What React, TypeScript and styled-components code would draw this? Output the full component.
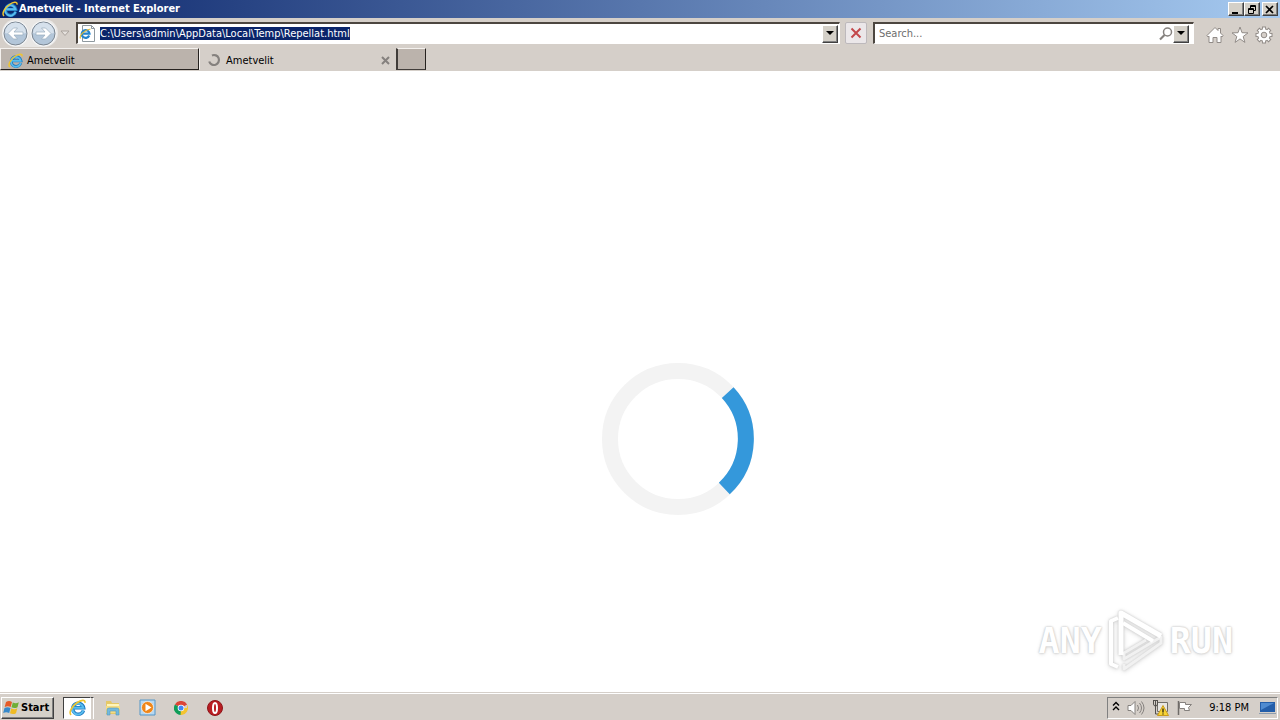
import React from "react";
import styled, { createGlobalStyle, css } from "styled-components";

const Global = createGlobalStyle`
  * { box-sizing: border-box; }
  body { margin: 0; background: #fff; }
  body, button, input { font-family: "DejaVu Sans Condensed", "DejaVu Sans", sans-serif; font-size: 11px; color: #000; }
  button { padding: 0; margin: 0; border: 0; background: none; }
  svg { display: block; flex: none; }
`;

const raised = css`
  background: #d4d0c8;
  border: 1px solid;
  border-color: #fff #404040 #404040 #fff;
  box-shadow: inset -1px -1px #808080;
`;

const Desktop = styled.div`
  min-height: 100vh;
  display: flex;
  flex-direction: column;
`;

const TitleBar = styled.header`
  height: 18px;
  display: flex;
  align-items: center;
  gap: 1px;
  padding: 0 2px;
  background: linear-gradient(90deg, #0a246a, #a6caf0);
`;

const Title = styled.h1`
  flex: 1;
  margin: 0;
  color: #fff;
  font-size: 11px;
  line-height: 18px;
`;

const WindowButtons = styled.div`
  display: flex;
`;

const WindowButton = styled.button<{ $apart?: boolean }>`
  ${raised}
  width: 16px;
  height: 14px;
  margin-left: ${(p) => (p.$apart ? 2 : 0)}px;
  display: grid;
  place-items: center;
`;

const NavBar = styled.nav`
  height: 30px;
  display: flex;
  align-items: center;
  padding: 0 4px 0 2px;
  background: #d5cfc9;
`;

const History = styled.div`
  display: flex;
  height: 28px;
  width: 56px;
  background: #e9e7e5;
  border-radius: 14px;
`;

const IconButton = styled.button<{ $w: number }>`
  width: ${(p) => p.$w}px;
  height: 28px;
  display: grid;
  place-items: center;
`;

const Field = styled.div<{ $grow: number }>`
  flex: ${(p) => p.$grow} 1 0;
  height: 22px;
  display: flex;
  align-items: center;
  padding: 0 1px;
  background: #fff;
  border: solid;
  border-width: 2px 1px 1px 2px;
  border-color: #4c4640 #fff #fff #4c4640;
`;

const FieldLine = styled.label<{ $indent?: boolean }>`
  flex: 1;
  height: 19px;
  display: flex;
  align-items: center;
  gap: 4px;
  padding-left: ${(p) => (p.$indent ? 3 : 0)}px;
`;

const TextInput = styled.input`
  flex: 1;
  min-width: 0;
  height: 16px;
  border: 0;
  padding: 0;
  outline: none;
  background: none;
  &::placeholder { color: #6d6d6d; opacity: 1; }
  &::selection { background: #0a246a; color: #fff; }
`;

const DropButton = styled.button<{ $inset?: boolean }>`
  ${raised}
  width: 16px;
  height: 18px;
  margin-right: ${(p) => (p.$inset ? 3 : 0)}px;
  display: grid;
  place-items: center;
`;

const StopButton = styled.button`
  width: 22px;
  height: 22px;
  margin: 0 6px 0 5px;
  display: grid;
  place-items: center;
  background: #ebe7e9;
  border: 1px solid #bdb9bc;
  border-radius: 2px;
`;

const Tools = styled.div`
  display: flex;
  margin-left: 9px;
  padding-top: 3px;
`;

const TabBar = styled.div`
  height: 23px;
  display: flex;
  background: #d5cfc9;
`;

const Tab = styled.div<{ $active?: boolean }>`
  width: ${(p) => (p.$active ? 197 : 199)}px;
  height: 22px;
  display: flex;
  align-items: center;
  padding: 2px 5px 0 7px;
  border: 1px solid;
  border-color: ${(p) => (p.$active ? "#d5cfc9 #d5cfc9 #d5cfc9 #f4f1ee" : "#f4f1ee #26221f #26221f #f4f1ee")};
  background: ${(p) => (p.$active ? "#d5cfc9" : "#bbb3ac")};
`;

const TabLabel = styled.button`
  flex: 1;
  display: flex;
  align-items: center;
  gap: 4px;
  text-align: left;
`;

const NewTab = styled.button`
  width: 30px;
  height: 22px;
  background: #bbb3ac;
  border: solid;
  border-width: 1px 1px 1px 2px;
  border-color: #f4f1ee #26221f #403c39 #403c39;
`;

const Page = styled.main`
  flex: 1;
  display: flex;
  flex-direction: column;
  justify-content: space-between;
  padding-top: 292px;
`;

const Loader = styled.div`
  padding-left: 47%;
`;

const Watermark = styled.div`
  align-self: flex-end;
  display: flex;
  align-items: center;
  gap: 5px;
  margin: 0 47px 18px 0;
`;

const MarkWord = styled.span`
  font-family: "DejaVu Sans Mono", monospace;
  font-weight: bold;
  font-size: 35px;
  line-height: 66px;
  color: #fff;
  text-shadow: 0 0 2px #c4c4c4, 0 0 2px #d8d8d8, 0 1px 4px #dedede;
`;

const MarkLogo = styled.svg`
  filter: drop-shadow(0 0 1px #c8c8c8) drop-shadow(0 1px 2px #dedede);
`;

const TaskBar = styled.footer`
  height: 28px;
  display: flex;
  align-items: center;
  padding: 2px 2px 0 1px;
  background: #d5cfc9;
  border-top: 1px solid #d5cfc9;
  box-shadow: inset 0 1px #fff;
`;

const StartButton = styled.button`
  ${raised}
  width: 53px;
  height: 22px;
  display: flex;
  align-items: center;
  gap: 1px;
  padding-left: 1px;
  font-weight: bold;
`;

const RunningApp = styled.button`
  width: 28px;
  height: 22px;
  margin-left: 9px;
  display: grid;
  place-items: center;
  background: #fff;
  border: 1px solid;
  border-color: #404040 #fff #fff #404040;
`;

const StackedWindow = styled.span`
  width: 3px;
  height: 22px;
  margin-right: 2px;
  border-top: 1px solid #404040;
  border-right: 1px solid #fff;
`;

const Tray = styled.div`
  height: 22px;
  margin-left: auto;
  display: flex;
  align-items: center;
  padding: 0 1px 0 4px;
  gap: 7px;
  border: 1px solid;
  border-color: #808080 #fff #fff #808080;
`;

const Clock = styled.time`
  margin: 0 3px 0 9px;
  white-space: nowrap;
`;

const IELogo = ({ size }: { size: number }) => (
  <svg width={size} height={size} viewBox="0 0 16 16" fill="none">
    <path d="M13.6 10.800A5.200 5.200 0 1 1 13.800 8.300H4.500" stroke="#1d78c0" strokeWidth="3.200" />
    <path d="M13.500 10.600A5.200 5.200 0 1 1 13.500 8.300H4.500" stroke="#59bdee" strokeWidth="1.900" />
    <path d="M2 15C-.8 12.500 3.100 6.500 7.500 3.500C11 1.100 15.600 0 15 3.600" stroke="#f0c52f" strokeWidth="1.500" />
  </svg>
);

const Arrow = ({ forward }: { forward?: boolean }) => (
  <svg width="27" height="27" viewBox="0 0 27 27">
    <circle cx="13.500" cy="13.500" r="13" fill="#f5f6f7" />
    <circle cx="13.500" cy="13.500" r="11.500" fill="#b3c6d9" stroke="#7b8590" />
    <path d="M3 13a10.500 10.500 0 0 1 21 0q-10.500 3-21 0" fill="#d6e1ec" />
    <path
      d={forward ? "M6 12h9l-3.500-4h4l5.500 5.500-5.500 5.500h-4l3.500-4H6z" : "M21 12h-9l3.500-4h-4L6 13.500l5.500 5.500h4L12 15h9z"}
      fill="#fff"
      stroke="#9aacbd"
      strokeWidth=".7"
    />
  </svg>
);

const Down = () => (
  <svg width="8" height="5" viewBox="0 0 8 5">
    <path d="M0 0h8L4 4z" fill="#000" />
  </svg>
);

export default function App() {
  const address = React.useRef<HTMLInputElement>(null);
  React.useEffect(() => {
    address.current?.focus();
    address.current?.select();
  }, []);

  return (
    <Desktop>
      <Global />
      <TitleBar>
        <IELogo size={16} />
        <Title>Ametvelit - Internet Explorer</Title>
        <WindowButtons>
          <WindowButton aria-label="Minimize">
            <svg width="10" height="9"><path d="M1 7h6v2H1z" /></svg>
          </WindowButton>
          <WindowButton aria-label="Restore">
            <svg width="10" height="9" fill="none" stroke="#000">
              <path d="M3.500 3V.5h5v5H7M3 1.500h6M1.500 3.500h5v5h-5zM1 4.500h6" />
            </svg>
          </WindowButton>
          <WindowButton $apart aria-label="Close">
            <svg width="10" height="9"><path d="M1 1l7 7M8 1L1 8" stroke="#000" strokeWidth="1.700" /></svg>
          </WindowButton>
        </WindowButtons>
      </TitleBar>

      <NavBar>
        <History>
          <IconButton $w={27} aria-label="Back"><Arrow /></IconButton>
          <IconButton $w={29} aria-label="Forward"><Arrow forward /></IconButton>
        </History>
        <IconButton $w={18} aria-label="Recent pages">
          <svg width="14" height="7"><path d="M1 1h8L5 5.500z" fill="#e5e1dd" stroke="#aaa39d" /></svg>
        </IconButton>
        <Field $grow={766}>
          <FieldLine>
            <svg width="17" height="17" viewBox="0 0 17 17" fill="none">
              <path d="M3.500.5h9l3 3v13h-12z" fill="#fff" stroke="#8f999f" />
              <path d="M12.500.5v3h3" stroke="#8f999f" />
              <path d="M10.200 10.500A3.900 3.900 0 1 1 10.500 8.700H3.500" stroke="#2484cc" strokeWidth="2.200" />
              <path d="M1.500 13.500C0 11 5 5 11.500 4" stroke="#e3b92f" strokeWidth="1.200" />
            </svg>
            <TextInput
              ref={address}
              aria-label="Address"
              spellCheck={false}
              defaultValue="C:\Users\admin\AppData\Local\Temp\Repellat.html"
            />
          </FieldLine>
          <DropButton aria-label="Show addresses"><Down /></DropButton>
        </Field>
        <StopButton aria-label="Stop">
          <svg width="12" height="12" viewBox="0 0 12 12">
            <path d="M1.500 1.500l9 9M10.500 1.500l-9 9" stroke="#c3484b" strokeWidth="2" />
          </svg>
        </StopButton>
        <Field $grow={319}>
          <FieldLine $indent>
            <TextInput aria-label="Search" placeholder="Search..." />
            <svg width="14" height="14" viewBox="0 0 14 14" fill="none" stroke="#85817e">
              <circle cx="8.500" cy="5" r="4" strokeWidth="1.500" />
              <path d="M5.500 8L1 12.500" strokeWidth="2.200" />
            </svg>
          </FieldLine>
          <DropButton $inset aria-label="Search options"><Down /></DropButton>
        </Field>
        <Tools>
          <IconButton $w={24} aria-label="Home">
            <svg width="18" height="18" viewBox="0 0 18 18">
              <path d="M9 1.500l3 3v-2h2.500v4.500L17 9.500l-1 1.500-1-.9v6.400h-4v-5H7v5H3v-6.400l-1 .9-1-1.500z" fill="#fff" stroke="#918b87" />
            </svg>
          </IconButton>
          <IconButton $w={25} aria-label="Favorites">
            <svg width="18" height="18" viewBox="0 0 18 18">
              <path d="M9 1l2 5.700 6 .2-4.800 3.600 1.700 5.900L9 12.900l-4.900 3.500 1.700-5.900L1 6.900l6-.2z" fill="#fff" stroke="#918b87" />
            </svg>
          </IconButton>
          <IconButton $w={24} aria-label="Tools">
            <svg width="18" height="18" viewBox="0 0 18 18" fill="none">
              {[0, 45, 90, 135].map((turn) => (
                <path key={turn} d="M9 .5v17" stroke="#918b87" strokeWidth="4" transform={`rotate(${turn} 9 9)`} />
              ))}
              <circle cx="9" cy="9" r="6.700" fill="#918b87" />
              {[0, 45, 90, 135].map((turn) => (
                <path key={turn} d="M9 1.500v15" stroke="#fff" strokeWidth="2.200" transform={`rotate(${turn} 9 9)`} />
              ))}
              <circle cx="9" cy="9" r="5.800" fill="#fff" />
              <circle cx="9" cy="9" r="2.800" fill="#d5cfc9" stroke="#918b87" />
            </svg>
          </IconButton>
        </Tools>
      </NavBar>

      <TabBar>
        <Tab>
          <TabLabel><IELogo size={15} />Ametvelit</TabLabel>
        </Tab>
        <Tab $active>
          <TabLabel>
            <svg width="15" height="14" viewBox="0 0 15 14" fill="none">
              <path d="M5 2.400A5 5 0 1 1 2.200 8.500" stroke="#85817e" strokeWidth="2.200" />
            </svg>
            Ametvelit
          </TabLabel>
          <button aria-label="Close tab">
            <svg width="9" height="9"><path d="M1 1l7 7M8 1L1 8" stroke="#85817e" strokeWidth="2" /></svg>
          </button>
        </Tab>
        <NewTab aria-label="New tab" />
      </TabBar>

      <Page>
        <Loader>
          <svg width="152" height="152" viewBox="0 0 152 152" fill="none" strokeWidth="16" role="img" aria-label="Loading">
            <circle cx="76" cy="76" r="68" stroke="#f3f3f3" />
            <path d="M125.700 29.600A68 68 0 0 1 122.300 125.500" stroke="#3498db" />
          </svg>
        </Loader>
        <Watermark>
          <MarkWord>ANY</MarkWord>
          <MarkLogo width="58" height="64" viewBox="0 0 58 64" fill="none" strokeLinejoin="round">
            <path d="M39 31L17 44V50L54 28V34L17 60V55" stroke="#f1f1f1" strokeWidth="3" />
            <path d="M11 9L4 12V55L11 58" stroke="#fff" strokeWidth="4" />
            <path d="M14 46V4L54 27" stroke="#fff" strokeWidth="5" />
            <path d="M16 14L46 32" stroke="#fff" strokeWidth="4" />
          </MarkLogo>
          <MarkWord>RUN</MarkWord>
        </Watermark>
      </Page>

      <TaskBar>
        <StartButton>
          <svg width="17" height="17" viewBox="0 0 17 17">
            <path d="M3 3q3-2 6 0L7.700 8Q5 6.500 1.700 8z" fill="#e45b28" />
            <path d="M9.800 3.400q3 1.600 6-.2L14.500 8.200q-3 1.700-6 .1z" fill="#70ae36" />
            <path d="M1.500 9q3-1.700 6 0L6.200 14q-3-1.700-6 0z" fill="#3689cb" />
            <path d="M8.300 9.300q3 1.700 6 0L13 14.200q-3 1.700-6 .1z" fill="#efbb24" />
          </svg>
          Start
        </StartButton>
        <RunningApp aria-label="Internet Explorer"><IELogo size={17} /></RunningApp>
        <StackedWindow />
        <IconButton $w={34} aria-label="File Explorer">
          <svg width="18" height="18" viewBox="0 0 18 18">
            <path d="M2 2h5l1 2h7v11H2z" fill="#e5c867" />
            <path d="M3 5h12v5H3z" fill="#fff5b9" />
            <path d="M2 7h14v7H2z" fill="#f4dc83" />
            <path d="M3 16v-5q0-2 2-2h8q2 0 2 2v5h-3v-4H6v4z" fill="#73b9dd" stroke="#5197bd" strokeWidth=".6" />
          </svg>
        </IconButton>
        <IconButton $w={34} aria-label="Media Player">
          <svg width="17" height="17" viewBox="0 0 17 17">
            <path d="M1 1h15v15H1z" fill="#b7d8f1" stroke="#5596c7" />
            <circle cx="8.500" cy="8.500" r="6" fill="#ef8619" stroke="#fff" strokeWidth=".6" />
            <path d="M6.500 4.800l6 3.700-6 3.700z" fill="#fff" />
          </svg>
        </IconButton>
        <IconButton $w={34} aria-label="Chrome">
          <svg width="14" height="14" viewBox="0 0 14 14">
            <path d="M7 7L.9 3.500A7 7 0 0 1 13.100 3.500z" fill="#db4437" />
            <path d="M7 7L.9 3.500A7 7 0 0 0 7 14z" fill="#0f9d58" />
            <path d="M7 7h6V3.500A7 7 0 0 1 6.500 14z" fill="#f4c430" />
            <circle cx="7" cy="7" r="3.300" fill="#fff" />
            <circle cx="7" cy="7" r="2.500" fill="#4285f4" />
          </svg>
        </IconButton>
        <IconButton $w={34} aria-label="Opera">
          <svg width="16" height="16" viewBox="0 0 16 16">
            <circle cx="8" cy="8" r="7.500" fill="#b91d22" stroke="#8d1519" />
            <ellipse cx="8" cy="8" rx="2" ry="5" fill="#b91d22" stroke="#fff" strokeWidth="2" />
          </svg>
        </IconButton>
        <Tray>
          <svg width="8" height="13" fill="none" stroke="#000" strokeWidth="1.400"><path d="M1 4.500l3-3 3 3M1 9l3-3 3 3" /></svg>
          <svg width="18" height="16" viewBox="0 0 18 16" fill="none" stroke="#85817e">
            <path d="M1 5.500h3l4-4v13l-4-4H1z" fill="#fff" />
            <path d="M10.500 5q2 3 0 6M12.500 3q4 5 0 10M14.500 1.500q5 6.500 0 13" />
          </svg>
          <svg width="17" height="17" viewBox="0 0 17 17" fill="none">
            <path d="M5.500 3.500h10v9h-10z" fill="#e7e5e2" stroke="#706d69" />
            <path d="M1.500 1v4q0 2 2 2t2-2V1M3.500 1v14h5M1 1.500h5" stroke="#53504d" />
            <path d="M11 6.500l5.500 10h-11z" fill="#f7d334" stroke="#c99a1b" />
            <path d="M11 9.500v4M11 14.500v1" stroke="#332d12" strokeWidth="1.400" />
          </svg>
          <svg width="17" height="16" viewBox="0 0 17 16">
            <path d="M2.500 1v14" stroke="#6f6b68" strokeWidth="1.500" />
            <path d="M3.500 2.500h6v2h6l-3 3 1 3h-5v-2h-5z" fill="#fff" stroke="#85817e" />
          </svg>
          <Clock>9:18 PM</Clock>
          <svg width="17" height="16" viewBox="0 0 17 16">
            <path d="M1 2h15v10H1z" fill="#245ea9" />
            <path d="M2 3h13L2 10z" fill="#4f8bd0" />
            <path d="M0 13h17v1H0z" fill="#8d9daf" />
          </svg>
        </Tray>
      </TaskBar>
    </Desktop>
  );
}
